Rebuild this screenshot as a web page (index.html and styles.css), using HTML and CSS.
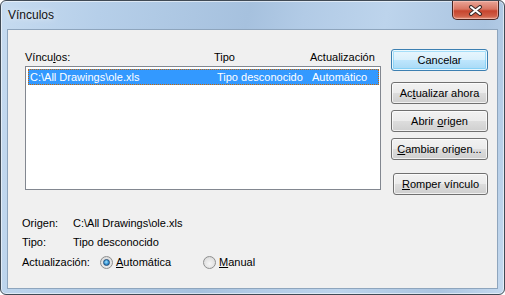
FILE: index.html
```html
<!DOCTYPE html>
<html>
<head>
<link rel="stylesheet" href="styles.css">
</head>
<body>
<div class="window">
    <div class="titlebar">
        <span class="title">Vínculos</span>
        <div class="close">
            <svg width="15" height="11" viewBox="0 0 15 11">
                <path d="M3 2 L12 9 M12 2 L3 9" stroke="#3a2a28" stroke-width="4" stroke-linecap="round"/>
                <path d="M3 2 L12 9 M12 2 L3 9" stroke="#ffffff" stroke-width="2" stroke-linecap="round"/>
            </svg>
        </div>
    </div>

    <div class="client">
        <div class="top">
            <div class="links">
                <div class="head">
                    <span>Víncu<u>l</u>os:</span>
                    <span>Tipo</span>
                    <span>Actualización</span>
                </div>
                <div class="listbox">
                    <div class="row selected">
                        <span>C:\All Drawings\ole.xls</span>
                        <span>Tipo desconocido</span>
                        <span>Automático</span>
                    </div>
                </div>
            </div>

            <div class="buttons">
                <button class="btn default">Cancelar</button>
                <button class="btn b-update">Ac<u>t</u>ualizar ahora</button>
                <button class="btn b-open">Abrir <u>o</u>rigen</button>
                <button class="btn b-change"><u>C</u>ambiar origen...</button>
                <button class="btn b-break"><u>R</u>omper vínculo</button>
            </div>
        </div>

        <div class="details">
            <div class="line">
                <span class="key">Origen:</span>
                <span>C:\All Drawings\ole.xls</span>
            </div>
            <div class="line">
                <span class="key">Tipo:</span>
                <span>Tipo desconocido</span>
            </div>
            <div class="line options">
                <span class="opt-key">Actualización:</span>
                <label class="option first"><span class="radio checked"></span><u>A</u>utomática</label>
                <label class="option"><span class="radio"></span><u>M</u>anual</label>
            </div>
        </div>
    </div>
</div>
</body>
</html>
```

FILE: styles.css
```css
body {
    margin: 0;
    background-color: #ffffff;
    font-family: "Liberation Sans", Arial, sans-serif;
    font-size: 11px;
    color: #000;
}

.window {
    width: 505px;
    height: 295px;
    box-sizing: border-box;
    border: 1px solid #404a55;
    border-radius: 6px;
    display: flex;
    flex-direction: column;
    background: linear-gradient(100deg, #c6dbf0 0%, #b6cfe9 18%, #a6c1de 45%, #b2cbe6 55%, #bdd4ec 70%, #aac4e0 88%, #c4d9ef 100%);
    box-shadow: inset 0 0 0 1px rgba(255, 255, 255, 0.55);
}

.titlebar {
    height: 28px;
    display: flex;
    justify-content: space-between;
    align-items: flex-start;
    padding-left: 7px;
}

.title {
    margin-top: 7px;
    font-size: 12px;
    line-height: 15px;
    color: #111;
    text-shadow: 0 0 6px rgba(255, 255, 255, 0.9);
}

.close {
    width: 47px;
    height: 19px;
    margin-right: 5px;
    box-sizing: border-box;
    border: 1px solid #4a2520;
    border-top: none;
    border-radius: 0 0 5px 5px;
    background: linear-gradient(#e9a597 0%, #d87562 45%, #c7452e 55%, #d06048 85%, #e39a85 100%);
    box-shadow: inset 0 0 0 1px rgba(255, 210, 200, 0.5);
    display: flex;
    justify-content: center;
    align-items: center;
}

.client {
    flex: 1;
    margin: 0 6px 5px 6px;
    border: 1px solid #8ea5bd;
    background-color: #f0f0f0;
}

.top {
    display: flex;
    gap: 10px;
    padding: 19px 0 0 17px;
}

.links {
    width: 356px;
}

.head {
    display: grid;
    grid-template-columns: 189px 96px 1fr;
    margin-top: 2px;
    line-height: 13px;
}

.listbox {
    margin-top: 2px;
    height: 124px;
    box-sizing: border-box;
    border: 1px solid #828790;
    background-color: #fff;
    padding: 2px 1px 0 2px;
}

.row {
    display: grid;
    grid-template-columns: 187px 95px 1fr;
    height: 16px;
    box-sizing: border-box;
    line-height: 14px;
}

.row span {
    padding-left: 1px;
}

.selected {
    background-color: #3399ff;
    color: #fff;
    border: 1px dotted #cc6600;
}

.buttons {
    display: flex;
    flex-direction: column;
    width: 97px;
}

.btn {
    height: 22px;
    padding: 0;
    font-family: "Liberation Sans", Arial, sans-serif;
    font-size: 11px;
    color: #000;
    border: 1px solid #707070;
    border-radius: 3px;
    background: linear-gradient(#f2f2f2 0%, #ebebeb 49%, #dddddd 50%, #cfcfcf 100%);
    box-shadow: inset 0 0 0 1px rgba(255, 255, 255, 0.7);
}

.default {
    border-color: #3c7fb1;
    background: linear-gradient(#eaf6fd 0%, #d9f0fc 49%, #bee6fd 50%, #a7d9f5 100%);
    box-shadow: inset 0 0 0 1px rgba(255, 255, 255, 0.8), inset 0 0 0 2px rgba(98, 200, 245, 0.5);
}

.b-update {
    margin-top: 11px;
}

.b-open {
    margin-top: 6px;
}

.b-change {
    margin-top: 6px;
}

.b-break {
    margin-top: 13px;
    margin-left: 2px;
}

.details {
    margin-top: 18px;
    padding-left: 14px;
}

.line {
    display: flex;
    height: 19px;
    align-items: center;
}

.key {
    width: 51px;
}

.options {
    height: 20px;
    margin-top: 1px;
}

.opt-key {
    width: 78px;
}

.option {
    display: flex;
    align-items: center;
}

.option.first {
    width: 103px;
}

.radio {
    width: 13px;
    height: 13px;
    box-sizing: border-box;
    margin-right: 3px;
    border: 1px solid #8e8f8f;
    border-radius: 50%;
    background: radial-gradient(circle at 50% 60%, #f6f6f6 0%, #e2e2e2 60%, #cfcfcf 100%);
    display: flex;
    justify-content: center;
    align-items: center;
}

.radio.checked::after {
    content: "";
    width: 7px;
    height: 7px;
    box-sizing: border-box;
    border-radius: 50%;
    border: 1px solid #1f4f7c;
    background: radial-gradient(circle at 45% 40%, #a6e2fb 0%, #3c9ad8 50%, #1a5a98 100%);
}
```
